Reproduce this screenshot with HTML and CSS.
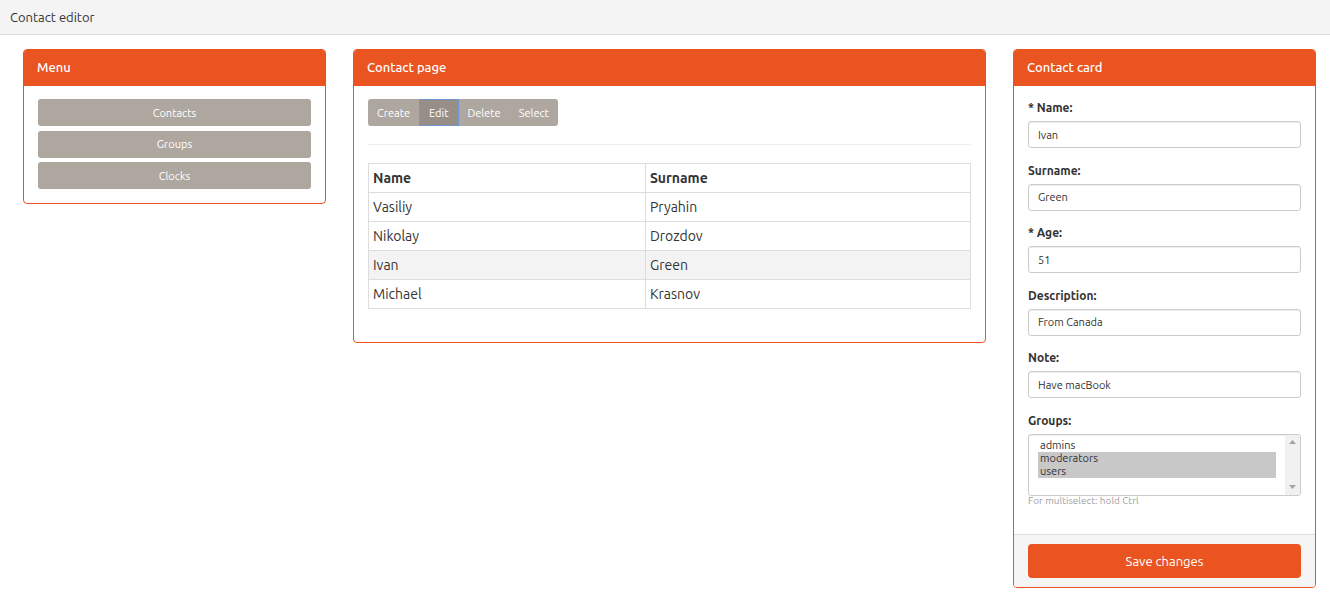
FILE: index.html
```html
<!DOCTYPE html>
<html lang="en">
<head>
<meta charset="utf-8">
<title>Contact editor</title>
<link rel="stylesheet" href="styles.css">
</head>
<body>
<header class="topbar">Contact editor</header>
<main class="layout">
  <section class="panel col-side">
    <div class="panel-heading">Menu</div>
    <div class="panel-body menu">
      <button class="btn btn-grey btn-block">Contacts</button>
      <button class="btn btn-grey btn-block">Groups</button>
      <button class="btn btn-grey btn-block">Clocks</button>
    </div>
  </section>

  <section class="panel col-main">
    <div class="panel-heading">Contact page</div>
    <div class="panel-body page">
      <div class="btn-group">
        <button class="btn btn-grey">Create</button>
        <button class="btn btn-grey active">Edit</button>
        <button class="btn btn-grey">Delete</button>
        <button class="btn btn-grey">Select</button>
      </div>
      <hr class="divider">
      <table class="table">
        <thead>
          <tr><th>Name</th><th>Surname</th></tr>
        </thead>
        <tbody>
          <tr><td>Vasiliy</td><td>Pryahin</td></tr>
          <tr><td>Nikolay</td><td>Drozdov</td></tr>
          <tr class="selected"><td>Ivan</td><td>Green</td></tr>
          <tr><td>Michael</td><td>Krasnov</td></tr>
        </tbody>
      </table>
    </div>
  </section>

  <section class="panel col-side">
    <div class="panel-heading">Contact card</div>
    <div class="panel-body card">
      <div class="form-group">
        <label class="label">* Name:</label>
        <input class="input" type="text" value="Ivan">
      </div>
      <div class="form-group">
        <label class="label">Surname:</label>
        <input class="input" type="text" value="Green">
      </div>
      <div class="form-group">
        <label class="label">* Age:</label>
        <input class="input" type="text" value="51">
      </div>
      <div class="form-group">
        <label class="label">Description:</label>
        <input class="input" type="text" value="From Canada">
      </div>
      <div class="form-group">
        <label class="label">Note:</label>
        <input class="input" type="text" value="Have macBook">
      </div>
      <div class="form-group last">
        <label class="label">Groups:</label>
        <div class="listbox">
          <div class="options">
            <div class="option">admins</div>
            <div class="option chosen">moderators</div>
            <div class="option chosen">users</div>
          </div>
          <div class="scrollbar">
            <svg class="arrow" width="7" height="4" viewBox="0 0 7 4"><path d="M0 4 L3.5 0 L7 4 Z" fill="#a3a3a3"/></svg>
            <svg class="arrow" width="7" height="4" viewBox="0 0 7 4"><path d="M0 0 L3.5 4 L7 0 Z" fill="#a3a3a3"/></svg>
          </div>
        </div>
        <div class="help">For multiselect: hold Ctrl</div>
      </div>
    </div>
    <div class="panel-footer">
      <button class="btn btn-orange btn-block">Save changes</button>
    </div>
  </section>
</main>
</body>
</html>
```

FILE: styles.css
```css
* { box-sizing: border-box; }

html, body {
  margin: 0;
  padding: 0;
  background: #ffffff;
  font-family: "Ubuntu", "Lato", "Noto Sans", sans-serif;
  color: #333333;
}

.topbar {
  height: 35px;
  background: #f4f4f4;
  border-bottom: 1px solid #dcdcdc;
  padding: 0 10px;
  font-size: 13px;
  line-height: 34px;
  color: #333;
}

.layout {
  display: flex;
  align-items: flex-start;
  gap: 27px;
  padding: 14px 14px 0 23px;
}

.col-side { width: 303px; flex: none; }
.col-main { width: 633px; flex: none; }

.panel {
  border: 1px solid #e95420;
  border-radius: 4px;
  background: #fff;
  overflow: hidden;
}

.panel-heading {
  background: #e95420;
  color: #fff;
  height: 36px;
  line-height: 34px;
  padding: 0 13px;
  font-size: 13px;
  font-weight: 500;
}

.panel-body { padding: 13px 14px 14px; }

.btn {
  font-family: inherit;
  border: 0;
  cursor: pointer;
  color: #fff;
  font-size: 11px;
  height: 27px;
  padding: 0 10px;
  border-radius: 3px;
}

.btn-grey { background: #aea79f; }
.btn-block { display: block; width: 100%; }

.menu { display: flex; flex-direction: column; gap: 4.5px; padding-bottom: 14px; }
.menu .btn { height: 27px; }

.btn-group { display: flex; width: max-content; }
.btn-group .btn { border-radius: 0; padding: 0 9px; }
.btn-group .btn:first-child { border-radius: 3px 0 0 3px; }
.btn-group .btn:last-child { border-radius: 0 3px 3px 0; }
.btn-group .btn.active {
  background: #978f87;
  border: 1px solid #6e95cf;
  padding: 0 9px;
  position: relative;
  z-index: 1;
}

.divider {
  border: 0;
  border-top: 1px solid #eeeeee;
  margin: 18px 0 18px;
}

.page { padding-bottom: 33px; }

.table {
  width: 100%;
  border-collapse: collapse;
  font-size: 14px;
}
.table th, .table td {
  border: 1px solid #dddddd;
  text-align: left;
  padding: 4px 4px;
  line-height: 20px;
  width: 46%;
}
.table th:last-child, .table td:last-child { width: 54%; }
.table th { font-weight: 700; }
.table tr.selected td { background: #f3f3f3; }

.card { padding: 13px 14px 13px; }

.form-group { margin-bottom: 13.6px; }
.form-group.last { margin-bottom: 0; padding-bottom: 14px; }

.label {
  display: block;
  font-size: 12px;
  font-weight: 700;
  line-height: 17px;
  margin-bottom: 5px;
}

.input {
  display: block;
  width: 100%;
  height: 27px;
  border: 1px solid #cccccc;
  border-radius: 3px;
  padding: 0 9px;
  font-family: inherit;
  font-size: 11px;
  color: #333;
  box-shadow: inset 0 1px 1px rgba(0,0,0,0.075);
  background: #fff;
}

.listbox {
  display: flex;
  height: 62px;
  border: 1px solid #cccccc;
  border-radius: 3px;
  font-size: 11px;
  line-height: 13px;
  box-shadow: inset 0 1px 1px rgba(0,0,0,0.075);
  overflow: hidden;
}
.options { flex: 1; padding: 4px 9px 0 9px; }
.option { padding-left: 2px; color: #333; }
.option.chosen { background: #c8c8c8; }
.scrollbar {
  width: 15px;
  background: #f1f1f1;
  display: flex;
  flex-direction: column;
  justify-content: space-between;
  align-items: center;
  padding: 5px 0 6px;
}

.help {
  font-size: 10px;
  color: #a0a0a0;
  line-height: 12px;
  margin-top: -1px;
}

.panel-footer {
  background: #f5f5f5;
  border-top: 1px solid #dddddd;
  padding: 9px 14px 9px;
}

.btn-orange {
  background: #e95420;
  height: 34px;
  font-size: 13px;
  border-radius: 4px;
}
```
